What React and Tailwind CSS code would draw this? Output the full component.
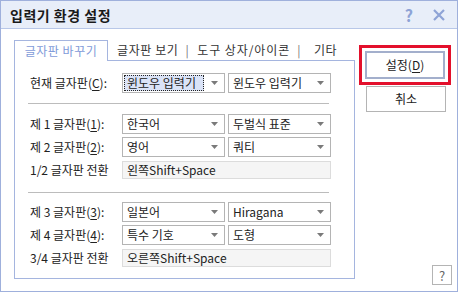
import React from "react";

const font = { fontFamily: '"Noto Sans CJK KR", "Noto Sans", sans-serif' };

function Arrow() {
  return (
    <svg width="7" height="4" viewBox="0 0 7 4" className="shrink-0">
      <path d="M0 0H7L3.5 4Z" fill="#7a7a7a" />
    </svg>
  );
}

function Select({ value, focused, className = "" }) {
  return (
    <div className={"flex items-center h-full border border-[#b4b4b4] bg-white pr-[6px] " + className}>
      <div className="flex-1 h-full p-px">
        {focused ? (
          <div className="h-full flex items-center pl-[2px] bg-[#dae3f7] border border-dotted border-[#222] mr-[6px]">
            {value}
          </div>
        ) : (
          <div className="h-full flex items-center pl-[3px]">{value}</div>
        )}
      </div>
      <Arrow />
    </div>
  );
}

function Label({ pre, mk, post }) {
  return (
    <div className="w-[94px] shrink-0 pl-[2px] whitespace-nowrap">
      {pre}
      <span className="underline underline-offset-2">{mk}</span>
      {post}
    </div>
  );
}

function SelRow({ label, a, b, focused, className = "" }) {
  return (
    <div className={"flex items-center h-[20px] " + className}>
      {label}
      <div className="flex h-full gap-[3px]">
        <Select value={a} focused={focused} className="w-[103px]" />
        <Select value={b} className="w-[103px]" />
      </div>
    </div>
  );
}

function Toggle({ label, value, className = "" }) {
  return (
    <div className={"flex items-center h-[18px] " + className}>
      <div className="w-[94px] shrink-0 pl-[2px] whitespace-nowrap">{label}</div>
      <div className="w-[209px] h-full border border-[#dcdcdc] bg-[#f5f5f5] flex items-center pl-[4px]">
        {value}
      </div>
    </div>
  );
}

export default function App() {
  return (
    <div style={font} className="w-[458px] h-[292px] border border-[#9fb0dc] bg-white flex flex-col text-[12px] text-[#222] leading-none overflow-hidden">
      <div className="h-[28px] shrink-0 bg-[#e8eef9] border-b border-[#b8c7e8] flex items-center pl-[9px] pr-[12px]">
        <div className="font-bold text-[14px] text-[#1a1a1a] tracking-[0.5px]">입력기 환경 설정</div>
        <div className="ml-auto flex items-center gap-[20px] text-[#8ea3d6] font-bold">
          <span className="text-[16px]">?</span>
          <svg width="12" height="12" viewBox="0 0 12 12">
            <path d="M1 1L11 11M11 1L1 11" stroke="#8ea3d6" strokeWidth="2.2" />
          </svg>
        </div>
      </div>

      <div className="flex flex-1 pl-[13px] pt-[11px]">
        <div className="w-[341px] flex flex-col">
          <div className="flex h-[20px] items-stretch">
            <div className="w-[94px] border border-b-0 border-[#a5b5df] bg-white -mb-px relative z-10 flex items-center justify-center text-[#7f9bd9] tracking-[0.5px]">
              글자판 바꾸기
            </div>
            <div className="flex items-center pl-[9px] text-[#333] whitespace-nowrap tracking-[0.6px]">
              <span>글자판 보기</span>
              <span className="text-[#777] pl-[7px]">|</span>
              <span className="pl-[8px] tracking-[0.9px]">도구 상자/아이콘</span>
              <span className="text-[#777] pl-[7px]">|</span>
              <span className="pl-[13px]">기타</span>
            </div>
          </div>
          <div className="h-[219px] border border-[#a5b5df] pl-[13px] pt-[12px]">
            <SelRow
              label={<Label pre="현재 글자판(" mk="C" post="):" />}
              a="윈도우 입력기"
              b="윈도우 입력기"
              focused
            />
            <div className="h-px w-[301px] bg-[#bcbcbc] mt-[10px]" />
            <SelRow className="mt-[10px]" label={<Label pre="제 1 글자판(" mk="1" post="):" />} a="한국어" b="두벌식 표준" />
            <SelRow className="mt-[3px]" label={<Label pre="제 2 글자판(" mk="2" post="):" />} a="영어" b="쿼티" />
            <Toggle className="mt-[4px]" label="1/2 글자판 전환" value="왼쪽Shift+Space" />
            <div className="h-px w-[301px] bg-[#bcbcbc] mt-[13px]" />
            <SelRow className="mt-[9px]" label={<Label pre="제 3 글자판(" mk="3" post="):" />} a="일본어" b="Hiragana" />
            <SelRow className="mt-[3px]" label={<Label pre="제 4 글자판(" mk="4" post="):" />} a="특수 기호" b="도형" />
            <Toggle className="mt-[4px]" label="3/4 글자판 전환" value="오른쪽Shift+Space" />
          </div>
        </div>

        <div className="flex flex-col pl-[4px] pt-[5px]">
          <div className="w-[92px] h-[40px] border-[3px] border-[#e3102c] p-[3px]">
            <div className="h-full border-2 border-[#a3afcc] flex items-center justify-center">
              설정(<span className="underline underline-offset-2">D</span>)
            </div>
          </div>
          <div className="ml-[7px] mt-px w-[80px] h-[26px] border border-[#b4b4b4] flex items-center justify-center">
            취소
          </div>
          <div className="mt-auto mb-[6px] ml-[73px] w-[20px] h-[20px] border border-[#b4b4b4] flex items-center justify-center text-[13px] text-[#666]">
            ?
          </div>
        </div>
      </div>
    </div>
  );
}
